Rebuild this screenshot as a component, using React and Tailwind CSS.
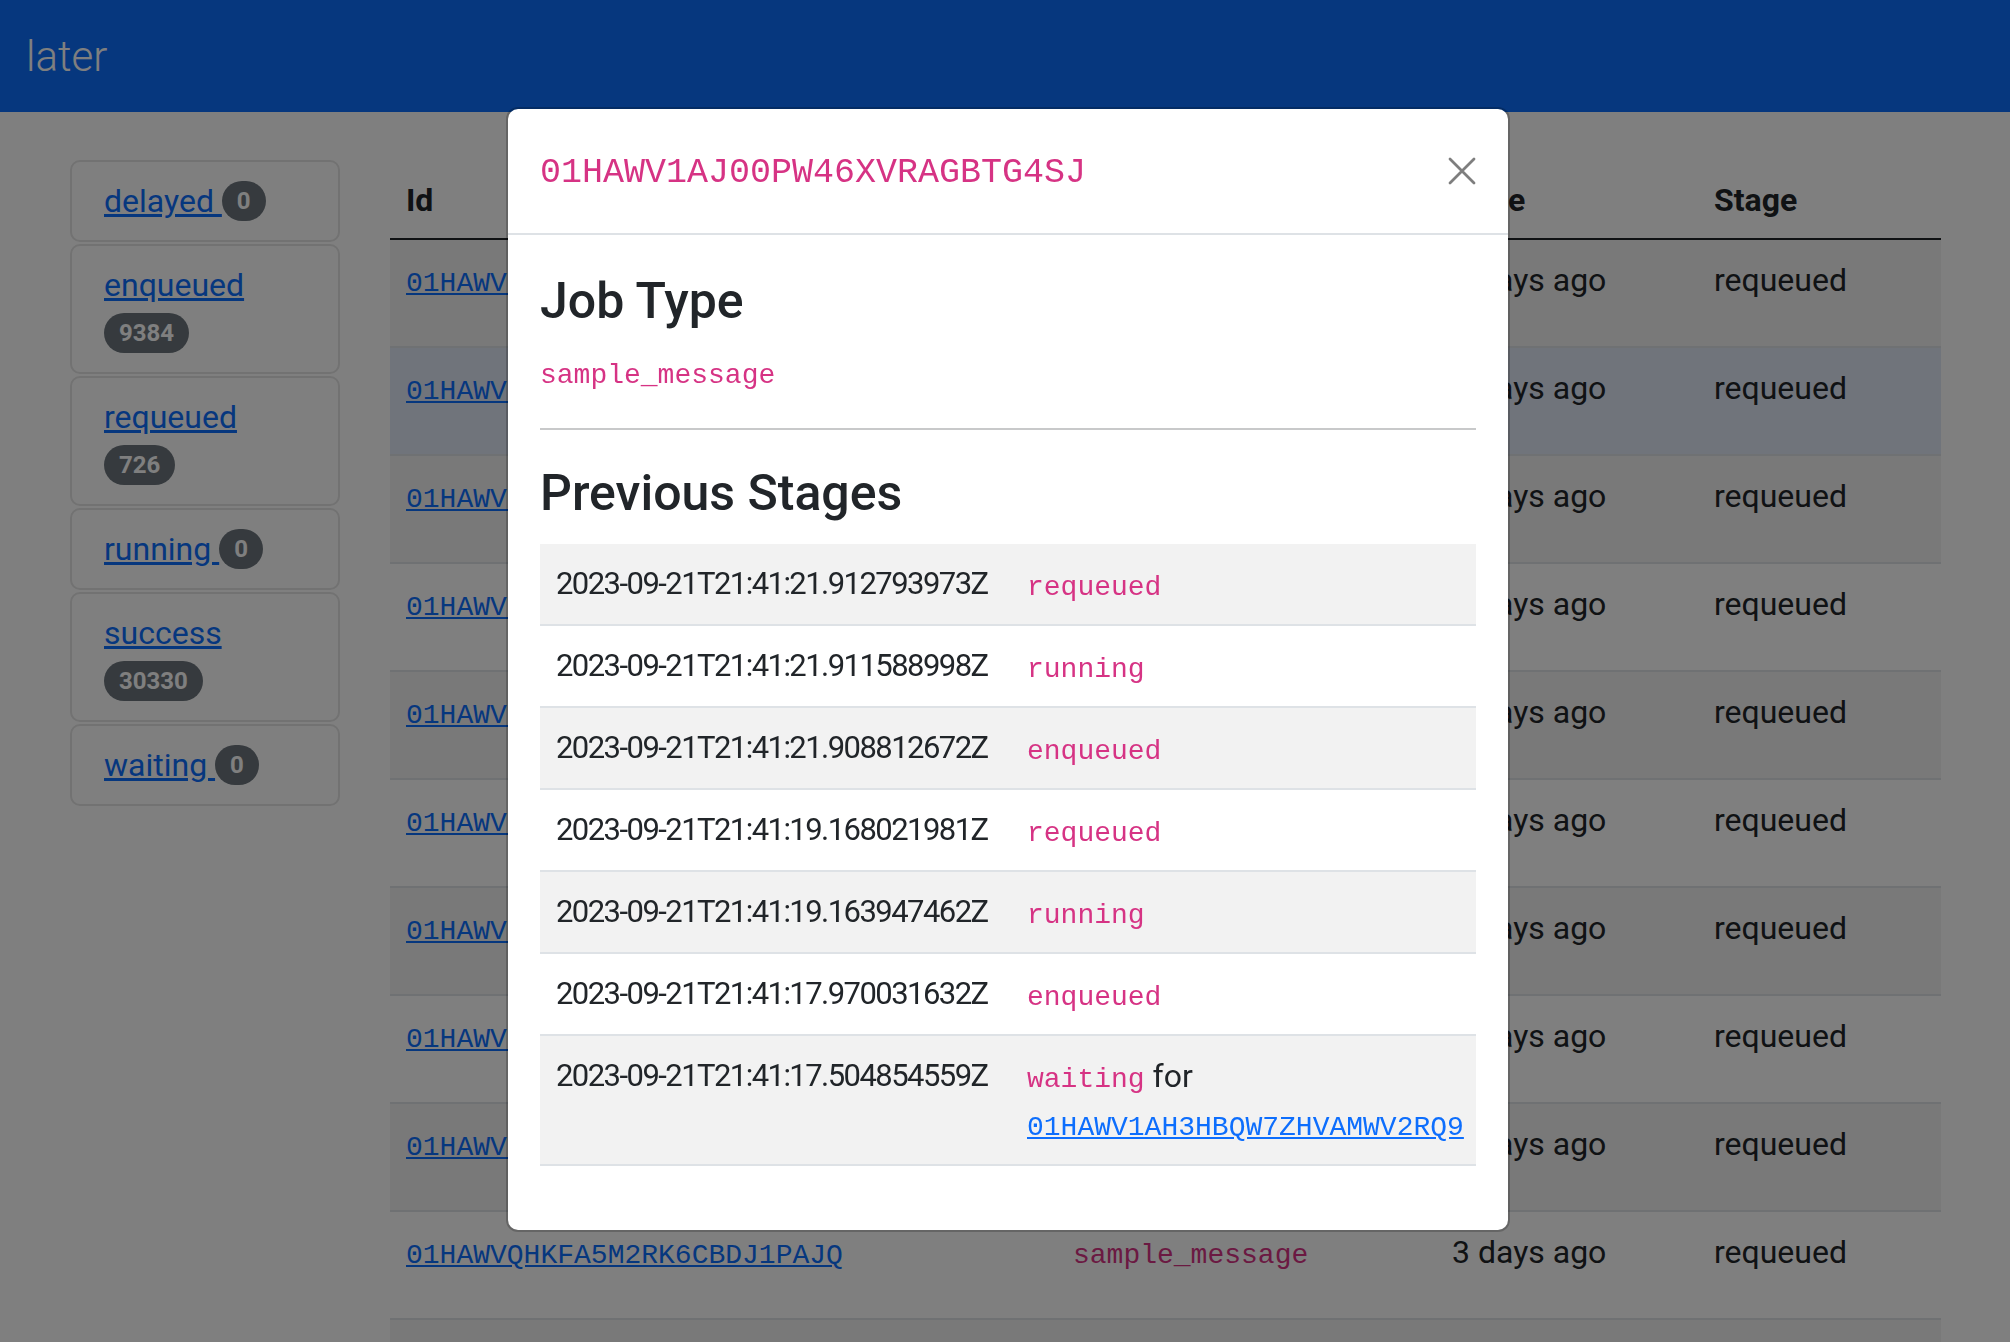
import React from "react";

const stageCounts = [
  { name: "delayed", count: "0", wrap: false },
  { name: "enqueued", count: "9384", wrap: true },
  { name: "requeued", count: "726", wrap: true },
  { name: "running", count: "0", wrap: false },
  { name: "success", count: "30330", wrap: true },
  { name: "waiting", count: "0", wrap: false },
];

const jobs = [
  "01HAWV1AJ00PW46XVRAGBTG4SJ",
  "01HAWV1AH3HBQW7ZHVAMWV2RQ9",
  "01HAWV19Z6K3M0QF8RXN2T7BCD",
  "01HAWV19XJ5PZ4G1QK8WCE3HNA",
  "01HAWV18TV2AR9J6YD0MXF5KPB",
  "01HAWV17QN4CW8E2HZ6BTJ1RVS",
  "01HAWV16MG7DX3K5PA9QYW0FNE",
  "01HAWV15HB1FT6N8RC2VZJ4KXM",
  "01HAWV14E90GY2Q7SD5WAK3MPT",
  "01HAWVQHKFA5M2RK6CBDJ1PAJQ",
  "01HAWVPGJDC3K0SQ4ABCH9NZYX",
  "01HAWVNFHCB2J9RP3ZABG8MYXW",
];

const previousStages = [
  { at: "2023-09-21T21:41:21.912793973Z", stage: "requeued" },
  { at: "2023-09-21T21:41:21.911588998Z", stage: "running" },
  { at: "2023-09-21T21:41:21.908812672Z", stage: "enqueued" },
  { at: "2023-09-21T21:41:19.168021981Z", stage: "requeued" },
  { at: "2023-09-21T21:41:19.163947462Z", stage: "running" },
  { at: "2023-09-21T21:41:17.970031632Z", stage: "enqueued" },
  { at: "2023-09-21T21:41:17.504854559Z", stage: "waiting", waitingFor: "01HAWV1AH3HBQW7ZHVAMWV2RQ9" },
];

function Badge({ children }) {
  return (
    <span className="inline-block rounded-full bg-[#6c757d] px-[15px] py-[8px] text-[24px] font-bold leading-none text-white">
      {children}
    </span>
  );
}

export default function App() {
  return (
    <div className="min-h-screen bg-white font-['Roboto',sans-serif] text-[#212529]">
      <nav className="flex h-[112px] items-center bg-[#0d6efd] px-[26px]">
        <span className="text-[42px] font-light text-white">later</span>
      </nav>

      <main className="flex gap-[50px] px-[70px] pt-[48px]">
        <aside className="flex w-[270px] shrink-0 flex-col gap-[2px]">
          {stageCounts.map((s) => (
            <div
              key={s.name}
              className="rounded-[10px] border-2 border-[#e4e4e4] py-[15px] pl-[32px] text-[32px] leading-[48px]"
            >
              <div className="flex h-[48px] items-center">
                <a href="#" className="whitespace-pre text-[#0d6efd] underline">
                  {s.wrap ? s.name : s.name + " "}
                </a>
                {!s.wrap && <Badge>{s.count}</Badge>}
              </div>
              {s.wrap && (
                <div className="flex h-[48px] items-center">
                  <Badge>{s.count}</Badge>
                </div>
              )}
            </div>
          ))}
        </aside>

        <section className="w-[1551px] shrink-0">
          <div className="grid h-[80px] grid-cols-[667px_379px_262px_243px] border-b-2 border-[#212529] text-[32px] font-bold leading-[48px]">
            <div className="p-[16px]">Id</div>
            <div className="p-[16px]">Job Type</div>
            <div className="p-[16px]">Time</div>
            <div className="p-[16px]">Stage</div>
          </div>
          {jobs.map((id, i) => (
            <div
              key={id}
              className={
                "grid h-[108px] grid-cols-[667px_379px_262px_243px] border-b-2 border-[#dee2e6] text-[32px] leading-[48px] " +
                (i === 1 ? "bg-[#e1e8f6]" : i % 2 === 0 ? "bg-[#f2f2f2]" : "bg-white")
              }
            >
              <div className="p-[16px]">
                <a href="#" className="font-['Liberation_Mono',monospace] text-[28px] leading-none text-[#0d6efd] underline">
                  {id}
                </a>
              </div>
              <div className="p-[16px]">
                <span className="font-['Liberation_Mono',monospace] text-[28px] leading-none text-[#d63384]">sample_message</span>
              </div>
              <div className="p-[16px]">3 days ago</div>
              <div className="p-[16px]">requeued</div>
            </div>
          ))}
        </section>
      </main>

      <div className="fixed inset-0 bg-black/50" />

      <div className="fixed left-[506px] top-[107px] w-[1004px] rounded-[12px] border-2 border-black/20 bg-white bg-clip-padding">
        <div className="flex h-[126px] items-center justify-between border-b-2 border-[#dee2e6] pl-[32px] pr-[29px]">
          <span className="pt-[4px] font-['Liberation_Mono',monospace] text-[35px] leading-[48px] text-[#d63384]">
            01HAWV1AJ00PW46XVRAGBTG4SJ
          </span>
          <button className="flex h-[34px] w-[34px] items-center justify-center opacity-50">
            <svg viewBox="0 0 16 16" width="32" height="32" fill="none" stroke="#000" strokeWidth="1.4" strokeLinecap="round">
              <path d="M2 2l12 12M14 2L2 14" />
            </svg>
          </button>
        </div>

        <div className="p-[32px]">
          <h3 className="mb-[16px] pt-[3px] text-[50px] font-medium leading-[62px]">Job Type</h3>
          <div className="text-[32px] leading-[48px]">
            <code className="font-['Liberation_Mono',monospace] text-[28px] leading-none text-[#d63384]">sample_message</code>
          </div>
          <hr className="my-[32px] border-t-2 border-[#c8c9ca]" />
          <h3 className="mb-[20px] text-[50px] font-medium leading-[62px]">Previous Stages</h3>
          <div className="mb-[32px] text-[32px] leading-[48px]">
            {previousStages.map((p, i) => (
              <div
                key={p.at}
                className={"flex border-b-2 border-[#dee2e6] " + (i % 2 === 0 ? "bg-[#f2f2f2]" : "bg-white")}
              >
                <div className="w-[471px] shrink-0 whitespace-nowrap p-[16px] text-[31px] tracking-[-1.55px]">{p.at}</div>
                <div className="flex-1 p-[16px]">
                  <code className="font-['Liberation_Mono',monospace] text-[28px] leading-none text-[#d63384]">{p.stage}</code>
                  {p.waitingFor && (
                    <>
                      {" "}for{" "}
                      <a href="#" className="font-['Liberation_Mono',monospace] text-[28px] leading-none text-[#0d6efd] underline">
                        {p.waitingFor}
                      </a>
                    </>
                  )}
                </div>
              </div>
            ))}
          </div>
        </div>
      </div>
    </div>
  );
}
